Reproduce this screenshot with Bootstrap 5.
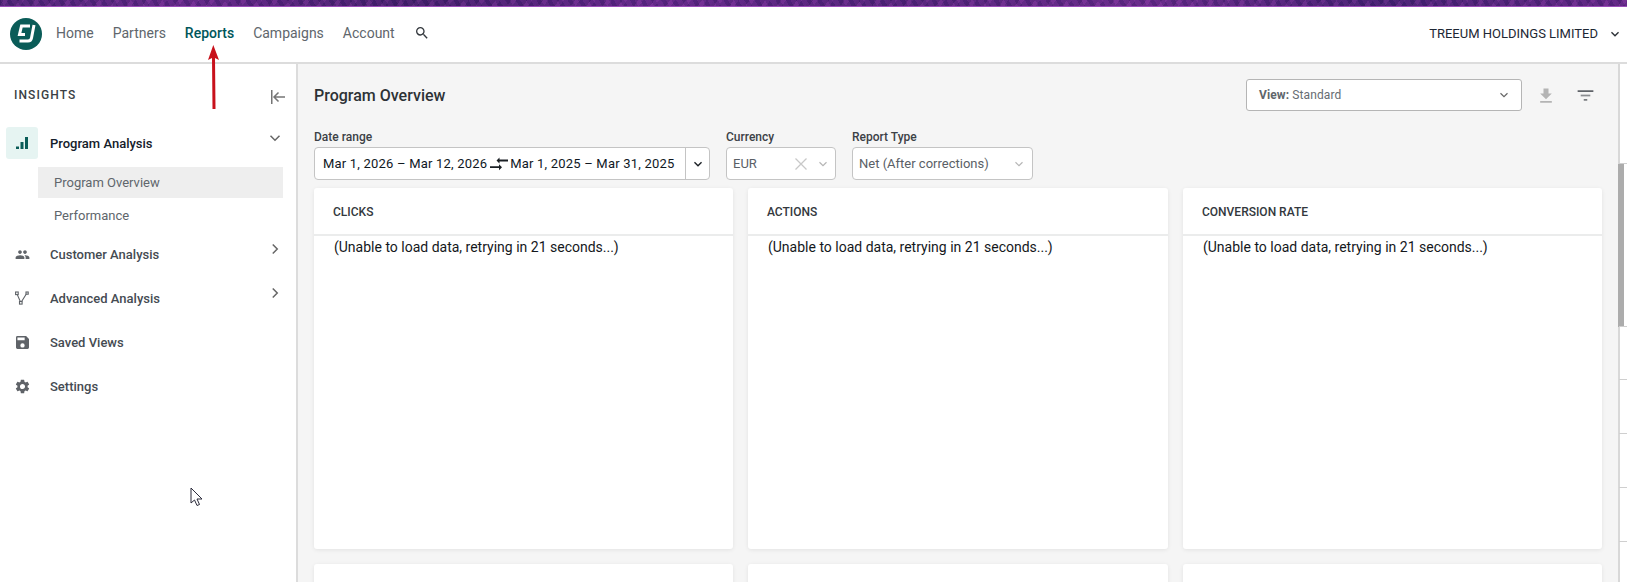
<!doctype html>
<html lang="en"><head><meta charset="utf-8"><title>Program Overview</title>
<link href="https://cdn.jsdelivr.net/npm/bootstrap@5.3.0/dist/css/bootstrap.min.css" rel="stylesheet">
<style>
html,body{height:100%;overflow:hidden;margin:0}
body{font-family:Roboto,"Liberation Sans",sans-serif;font-size:14px;color:#212529;background:#fff;position:relative}
.strip{height:7px;box-shadow:inset 0 -1px 0 #9a4cb8;background:repeating-linear-gradient(125deg,rgba(20,10,60,.16) 0 3px,rgba(150,70,170,.12) 3px 7px,rgba(30,15,80,.14) 7px 13px),repeating-linear-gradient(60deg,rgba(15,10,70,.14) 0 4px,rgba(170,80,190,.1) 4px 9px),linear-gradient(90deg,#55287c,#6a2a8e 12%,#4a2270 25%,#6b2a90 40%,#5a2680 55%,#722e92 70%,#4c2478 85%,#6a2a8c)}
.topbar{height:57px;border-bottom:2px solid #dcdcdc;padding-left:10px;padding-right:4px;padding-bottom:1px}
.logo{width:32px;height:32px;margin-right:14px;flex:none}
.tnav{gap:19px;font-size:14px;color:#60666c;margin-bottom:2px}
.tnav .on{color:#00565a;font-weight:500}
.acct{font-size:13px;color:#1d2733}
.shell{height:518px}
.side{width:298px;flex:none;border-right:2px solid #dcdcdc;padding-right:13px}
.sidehead{height:63px;padding-left:14px;font-size:12px;font-weight:500;letter-spacing:1.1px;color:#3a3f44}
.sidetitle{margin-bottom:2px}
.collapse-ic{margin-right:-4px;margin-top:2px}
.mrow{padding-left:6px;height:44px;font-size:13px;font-weight:500;color:#454b52}
.mlabel{padding-top:2px}
.micon{width:32px;height:32px;flex:none;margin-right:12px;border-radius:3px}
.micon.act{background:#e6f4f2}
.mrow.open{color:#14202a;height:32px;margin-bottom:8px}
.subitem{margin-left:38px;height:31px;padding-left:16px;font-size:13px;color:#60666c;margin-bottom:2px}
.subitem.sel{background:#eeeeee}
.subitem.last{margin-bottom:1px}
.mchev{margin-left:auto;margin-right:-1px;margin-bottom:11px;flex:none}
.main{background:#f5f5f5;flex:1;min-width:0;padding:0 20px 0 16px;border-right:2px solid #d8d8d8;margin-right:7px;overflow:hidden}
.head{height:62px}
.head h1{font-size:16px;font-weight:500;margin:2px 0 0;color:#2d3236}
.viewbox{width:276px;height:32px;background:#fff;border:1px solid #b5b5b5;border-radius:3px;padding:0 10px 0 12px;font-size:12px;letter-spacing:.1px;color:#666c72}
.viewbox b{font-weight:700;color:#60666c}
.dl-ic{margin-left:14px;margin-top:2px}
.fl-ic{margin-left:19px;margin-right:2px}
.flt{gap:16px;padding-top:4px}
.flt label{display:block;font-size:12px;font-weight:500;color:#3c4146;line-height:14px;margin-bottom:3px}
.ctl{height:33px;background:#fff;border:1px solid #c4c4c4;border-radius:4px;font-size:13px}
.date{width:396px;color:#10181f;padding-left:8px;letter-spacing:.2px}
.date .sep{border-left:1px solid #c4c4c4;width:24px;align-self:stretch;flex:none;margin-left:auto}
.swap{margin:0 2px 0 3px;flex:none}
.cur{width:110px;color:#5a6066;padding-left:6px;padding-right:5px}
.xic{margin-right:9px}
.rep{width:181px;color:#5a6066;padding-left:6px;padding-right:6px}
.kgrid{display:grid;grid-template-columns:419px 420px 419px;column-gap:15px;row-gap:15px;margin-top:8px}
.kcard{height:361px;background:#fff;border-radius:3px;box-shadow:0 1px 4px rgba(0,0,0,.08)}
.khead{height:48px;padding-left:19px;padding-top:1px;border-bottom:2px solid #ebecec;font-size:12px;font-weight:500;color:#33383d}
.kbody{padding:1px 0 0 20px;font-size:14px;line-height:20px;color:#14181c}
.rail{position:absolute;right:3px;top:164px;width:6px;height:163px;background:#acacac}
.railw{position:absolute;right:0;width:8px;height:1px;background:#cfcfcf}
.arrow{position:absolute;left:205px;top:45px}
.cursor{position:absolute;left:190px;top:487px}
</style></head><body>
<div class="strip"></div>
<nav class="topbar d-flex align-items-center">
<svg class="logo" viewBox="0 0 32 32"><circle cx="16" cy="16" r="16" fill="#0a5c58"/><path d="M20 8H11.500L9.500 16.500H15" fill="none" stroke="#fff" stroke-width="3"/><path d="M24 7 21.500 20Q21 23 18 23H9.500" fill="none" stroke="#fff" stroke-width="3"/></svg>
<div class="tnav d-flex align-items-center"><span>Home</span><span>Partners</span><span class="on">Reports</span><span>Campaigns</span><span>Account</span>
<svg width="16" height="16" viewBox="0 0 24 24" fill="#33383d"><path d="M15.500 14h-.790l-.280-.270A6.470 6.470 0 0 0 16 9.500 6.500 6.500 0 1 0 9.500 16c1.610 0 3.090-.590 4.230-1.570l.270.280v.790l5 4.990L20.490 19l-4.990-5zm-6 0C7.010 14 5 11.990 5 9.500S7.010 5 9.500 5 14 7.010 14 9.500 11.990 14 9.500 14z"/></svg></div>
<div class="ms-auto d-flex align-items-center acct"><span>TREEUM HOLDINGS LIMITED</span>
<svg style="margin-left:9px" width="16" height="16" viewBox="0 0 24 24" fill="#2b3036"><path d="M7.410 8.590 12 13.170l4.590-4.580L18 10l-6 6-6-6z"/></svg></div>
</nav>
<div class="shell d-flex">
<aside class="side">
<div class="sidehead d-flex align-items-center justify-content-between"><span class="sidetitle">INSIGHTS</span>
<svg class="collapse-ic" width="16" height="14" viewBox="0 0 16 14" fill="none" stroke="#757575" stroke-width="1.500"><path d="M.75 0v14M14 7H3M7.500 2.500 3 7l4.500 4.500"/></svg></div>
<div class="mrow open d-flex align-items-center"><span class="micon act d-flex align-items-center justify-content-center"><svg width="14" height="14" viewBox="0 0 14 14" fill="#0a5c58"><rect x="1" y="10.500" width="3" height="2.500"/><rect x="5.500" y="6" width="3" height="7"/><rect x="10" y="1" width="3" height="12"/></svg></span><span class="mlabel">Program Analysis</span>
<svg class="mchev" width="18" height="18" viewBox="0 0 24 24" fill="none" stroke="#666" stroke-width="2"><path d="M6 9l6 6 6-6"/></svg></div>
<div class="subitem sel d-flex align-items-center">Program Overview</div>
<div class="subitem last d-flex align-items-center">Performance</div>
<div class="mrow d-flex align-items-center"><span class="micon d-flex align-items-center justify-content-center"><svg width="15" height="15" viewBox="0 0 24 24" fill="#5f6368"><path d="M16 11c1.660 0 2.990-1.340 2.990-3S17.660 5 16 5s-3 1.340-3 3 1.340 3 3 3zm-8 0c1.660 0 2.990-1.340 2.990-3S9.660 5 8 5 5 6.340 5 8s1.340 3 3 3zm0 2c-2.330 0-7 1.170-7 3.500V19h14v-2.500C15 14.170 10.330 13 8 13zm8 0c-.290 0-.620.020-.970.050 1.160.840 1.970 1.970 1.970 3.450V19h6v-2.500c0-2.330-4.670-3.500-7-3.500z"/></svg></span><span class="mlabel">Customer Analysis</span>
<svg class="mchev" width="18" height="18" viewBox="0 0 24 24" fill="none" stroke="#666" stroke-width="2"><path d="M9 6l6 6-6 6"/></svg></div>
<div class="mrow d-flex align-items-center"><span class="micon d-flex align-items-center justify-content-center"><svg width="14" height="14" viewBox="0 0 14 14" fill="none" stroke="#5f6368" stroke-width="1.100"><rect x=".6" y="1" width="2.600" height="2.600"/><rect x="11" y="1" width="2.200" height="2.200"/><rect x="4.500" y="10.500" width="2.600" height="2.600"/><path d="M2.300 3.600 5.300 10.500M6.600 10.500 11.300 3"/></svg></span><span class="mlabel">Advanced Analysis</span>
<svg class="mchev" width="18" height="18" viewBox="0 0 24 24" fill="none" stroke="#666" stroke-width="2"><path d="M9 6l6 6-6 6"/></svg></div>
<div class="mrow d-flex align-items-center"><span class="micon d-flex align-items-center justify-content-center"><svg width="13" height="13" viewBox="3 3 18 18" fill="#5f6368"><path d="M17 3H5a2 2 0 0 0-2 2v14a2 2 0 0 0 2 2h14a2 2 0 0 0 2-2V7l-4-4zm-5 16a3 3 0 1 1 0-6 3 3 0 0 1 0 6zm3-10H5V5h10v4z"/></svg></span><span class="mlabel">Saved Views</span></div>
<div class="mrow d-flex align-items-center"><span class="micon d-flex align-items-center justify-content-center"><svg width="17" height="17" viewBox="0 0 24 24" fill="#5f6368"><path d="M19.140 12.940c.040-.300.060-.610.060-.940 0-.320-.020-.640-.070-.940l2.030-1.580a.49.49 0 0 0 .120-.610l-1.920-3.320a.488.488 0 0 0-.590-.220l-2.390.960c-.500-.380-1.030-.700-1.620-.940l-.360-2.540a.484.484 0 0 0-.480-.410h-3.840c-.240 0-.430.170-.470.410l-.360 2.540c-.590.240-1.130.570-1.620.940l-2.390-.960c-.220-.080-.470 0-.590.220L2.740 8.870c-.120.210-.080.470.120.610l2.030 1.580c-.050.300-.090.630-.090.940s.020.640.070.940l-2.030 1.580a.49.49 0 0 0-.120.610l1.920 3.320c.120.220.370.290.590.220l2.390-.960c.500.380 1.030.700 1.620.940l.360 2.540c.050.240.240.410.480.410h3.840c.240 0 .440-.170.470-.410l.360-2.540c.590-.240 1.130-.560 1.620-.940l2.390.960c.220.080.470 0 .590-.220l1.920-3.320c.120-.220.070-.470-.120-.610l-2.010-1.580zM12 15.600A3.610 3.610 0 0 1 8.400 12c0-1.980 1.620-3.600 3.600-3.600s3.600 1.620 3.600 3.600-1.620 3.600-3.600 3.600z"/></svg></span><span class="mlabel">Settings</span></div>
</aside>
<main class="main">
<div class="head d-flex align-items-center"><h1>Program Overview</h1>
<div class="ms-auto d-flex align-items-center"><div class="viewbox d-flex align-items-center"><span><b>View:</b> Standard</span>
<svg class="ms-auto" width="14" height="14" viewBox="0 0 24 24" fill="none" stroke="#666" stroke-width="2"><path d="M6 9l6 6 6-6"/></svg></div>
<svg class="dl-ic" width="20" height="20" viewBox="0 0 24 24" fill="#b4b4b4"><path d="M19 9h-4V3H9v6H5l7 7 7-7zM5 18v2h14v-2H5z"/></svg>
<svg class="fl-ic" width="21" height="21" viewBox="0 0 24 24"><path fill="#5f6368" d="M3 6h18v2H3z"/><path fill="#8a8d90" d="M6.500 11h11v2h-11z"/><path fill="#7a7d80" d="M10 16h4v2h-4z"/></svg></div></div>
<div class="flt d-flex">
<div><label>Date range</label><div class="ctl date d-flex align-items-center"><span>Mar 1, 2026 – Mar 12, 2026</span>
<svg class="swap" width="18" height="14" viewBox="0 0 18 14" fill="#1a1f24"><path d="M18 2.500H9.500V.5L6.500 3.500l3 3V4.500H18zM0 9.200H9V7.200l3 3-3 3v-2.100H0z"/></svg><span>Mar 1, 2025 – Mar 31, 2025</span>
<span class="sep d-flex align-items-center justify-content-center"><svg width="16" height="16" viewBox="0 0 24 24" fill="#1a1f24"><path d="M7.410 8.590 12 13.170l4.590-4.580L18 10l-6 6-6-6z"/></svg></span></div></div>
<div><label>Currency</label><div class="ctl cur d-flex align-items-center"><span>EUR</span>
<svg class="ms-auto xic" width="12" height="12" viewBox="0 0 12 12" stroke="#c8c8c8" stroke-width="1.300"><path d="M.5.5l11 11M11.500.5l-11 11"/></svg>
<svg width="14" height="14" viewBox="0 0 24 24" fill="none" stroke="#b5b5b5" stroke-width="2"><path d="M6 9l6 6 6-6"/></svg></div></div>
<div><label>Report Type</label><div class="ctl rep d-flex align-items-center"><span>Net (After corrections)</span>
<svg class="ms-auto" width="14" height="14" viewBox="0 0 24 24" fill="none" stroke="#b5b5b5" stroke-width="2"><path d="M6 9l6 6 6-6"/></svg></div></div>
</div>
<div class="kgrid">
<div class="kcard"><div class="khead d-flex align-items-center">CLICKS</div><div class="kbody">(Unable to load data, retrying in 21 seconds...)</div></div>
<div class="kcard"><div class="khead d-flex align-items-center">ACTIONS</div><div class="kbody">(Unable to load data, retrying in 21 seconds...)</div></div>
<div class="kcard"><div class="khead d-flex align-items-center">CONVERSION RATE</div><div class="kbody">(Unable to load data, retrying in 21 seconds...)</div></div>
<div class="kcard"></div><div class="kcard"></div><div class="kcard"></div>
</div>
</main>
</div>
<div class="rail"></div>
<div class="railw" style="top:163px"></div><div class="railw" style="top:326px"></div><div class="railw" style="top:379px"></div><div class="railw" style="top:433px"></div><div class="railw" style="top:487px"></div><div class="railw" style="top:541px"></div>
<svg class="arrow" width="18" height="65" viewBox="0 0 18 65"><path d="M8.300 0 14 15 10 13 10.500 64H7.500L7 13 3 15z" fill="#c8111b"/></svg>
<svg class="cursor" width="14" height="20" viewBox="0 0 14 20" fill="#fff" stroke="#2a2a3a" stroke-width="1"><path d="M1 1v15l3.500-3 2.500 5.500 2.500-1-2.500-5.500H12z"/></svg>
<script src="https://cdn.jsdelivr.net/npm/bootstrap@5.3.0/dist/js/bootstrap.bundle.min.js"></script>
</body></html>
